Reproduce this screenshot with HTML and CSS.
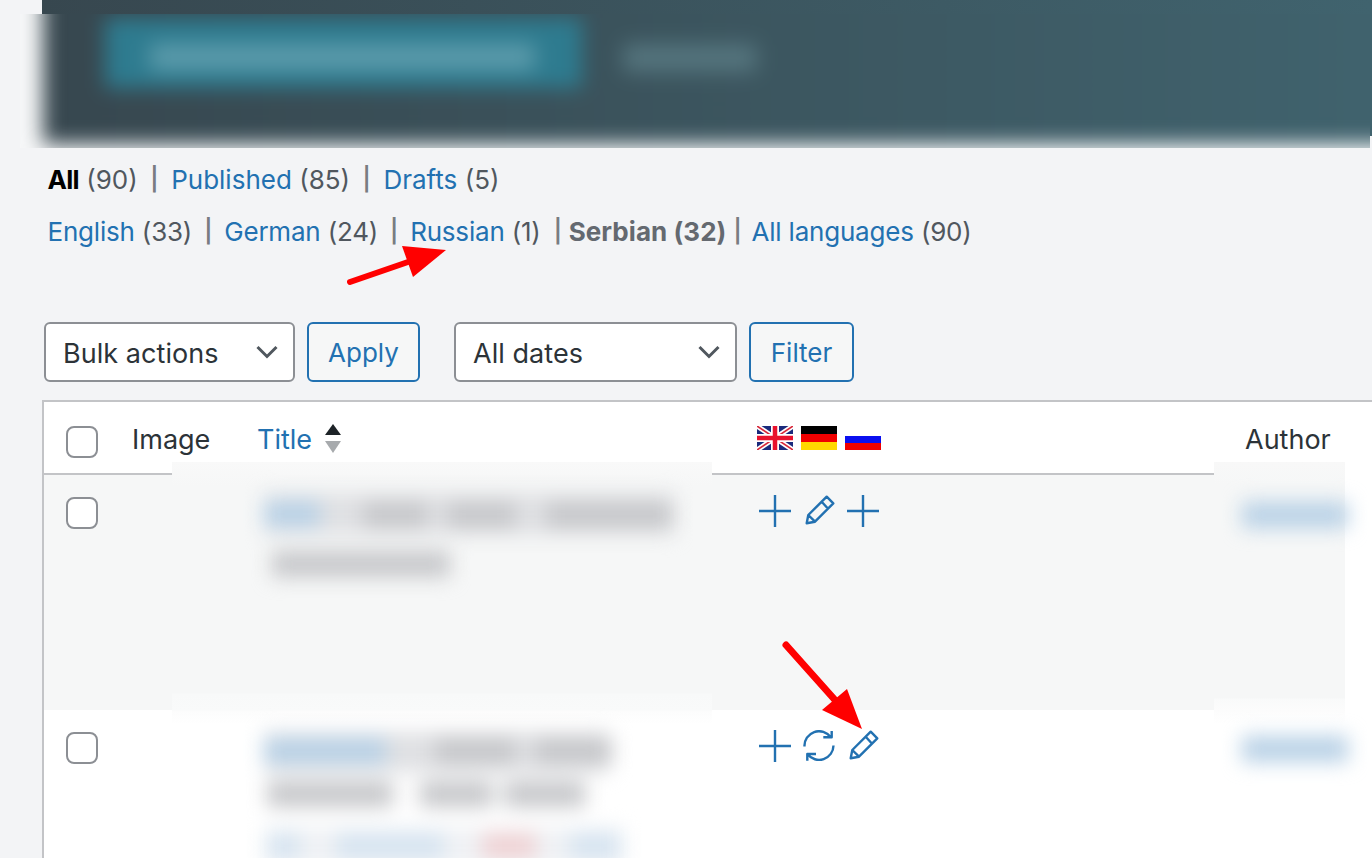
FILE: index.html
```html
<!DOCTYPE html>
<html lang="en">
<head>
<meta charset="utf-8">
<title>Posts</title>
<link rel="stylesheet" href="styles.css">
</head>
<body>
<svg class="defs" aria-hidden="true">
  <symbol id="i-plus" viewBox="0 0 32 32"><path d="M16 0V32M0 16H32"/></symbol>
  <symbol id="i-edit" viewBox="0 0 32 32"><path d="M23.7 1.7L30.3 8.3L12 26.7L3.7 28.3L5.3 20ZM18.7 6.7L25.3 14M5.8 20.5L11.5 26.2"/></symbol>
  <symbol id="i-sync" viewBox="0 0 32 32"><path d="M1.5 16.5A14.5 14.5 0 0 1 27.8 7.3M30.5 15.5A14.5 14.5 0 0 1 4.6 24.3M20.3 7.3H28.7V1M13 24H4.3V30.7"/></symbol>
</svg>

<header class="banner">
  <div class="banner-strip"></div>
  <div class="banner-shot">
    <div class="banner-dark">
      <div class="banner-btn"><div class="banner-btn-text"></div></div>
      <div class="banner-link"></div>
    </div>
  </div>
</header>

<ul class="filters filters-status">
  <li><strong class="current">All</strong> <span class="count">(90)</span></li>
  <li class="sep">|</li>
  <li><a href="#">Published</a> <span class="count">(85)</span></li>
  <li class="sep">|</li>
  <li><a href="#">Drafts</a> <span class="count">(5)</span></li>
</ul>
<ul class="filters filters-lang">
  <li><a href="#">English</a> <span class="count">(33)</span></li>
  <li class="sep">|</li>
  <li><a href="#">German</a> <span class="count">(24)</span></li>
  <li class="sep">|</li>
  <li><a href="#">Russian</a> <span class="count">(1)</span></li>
  <li class="sep sep-before">|</li>
  <li class="lang-current">Serbian (32)</li>
  <li class="sep sep-after">|</li>
  <li><a href="#">All languages</a> <span class="count">(90)</span></li>
</ul>

<div class="actions">
  <div class="select select-bulk">Bulk actions <svg class="chevron" viewBox="0 0 22 14"><path d="M1.5 2L11 11.5L20.5 2"/></svg></div>
  <button class="btn btn-apply">Apply</button>
  <div class="select select-dates">All dates <svg class="chevron" viewBox="0 0 22 14"><path d="M1.5 2L11 11.5L20.5 2"/></svg></div>
  <button class="btn btn-filter">Filter</button>
</div>

<section class="table">
  <div class="row row-head">
    <div class="cell-check"><span class="checkbox"></span></div>
    <div class="col-image">Image</div>
    <div class="col-title"><a href="#">Title</a>
      <span class="sort"><i class="sort-up"></i><i class="sort-down"></i></span>
    </div>
    <div class="col-flags">
      <svg class="flag" viewBox="0 0 36 24"><rect width="36" height="24" fill="#1a2a7c"/><path d="M0 0L36 24M36 0L0 24" stroke="#fff" stroke-width="5"/><path d="M0 0L36 24M36 0L0 24" stroke="#d8283a" stroke-width="1.6"/><path d="M18 0V24M0 12H36" stroke="#fff" stroke-width="8"/><path d="M18 0V24M0 12H36" stroke="#e8112d" stroke-width="4.5"/></svg>
      <svg class="flag" viewBox="0 0 36 24"><rect width="36" height="8" fill="#000"/><rect y="8" width="36" height="8" fill="#f00000"/><rect y="16" width="36" height="8" fill="#ffd800"/></svg>
      <svg class="flag" viewBox="0 0 36 24"><rect y="7" width="36" height="6" fill="#fff"/><rect y="10" width="36" height="7" fill="#0a10f0"/><rect y="17" width="36" height="7" fill="#f00000"/></svg>
    </div>
    <div class="col-author">Author</div>
  </div>

  <div class="row row-post row-alt">
    <div class="cell-check"><span class="checkbox"></span></div>
    <div></div>
    <div></div>
    <div class="col-icons">
      <svg class="icon"><use href="#i-plus"/></svg>
      <svg class="icon"><use href="#i-edit"/></svg>
      <svg class="icon"><use href="#i-plus"/></svg>
    </div>
    <div></div>
  </div>

  <div class="row row-post row-last">
    <div class="cell-check"><span class="checkbox"></span></div>
    <div></div>
    <div></div>
    <div class="col-icons">
      <svg class="icon"><use href="#i-plus"/></svg>
      <svg class="icon"><use href="#i-sync"/></svg>
      <svg class="icon"><use href="#i-edit"/></svg>
    </div>
    <div></div>
  </div>

  <div class="redact redact-title">
    <div class="smudges">
      <i class="bar haze h1"></i><i class="bar haze h2"></i><i class="bar haze h3"></i>
      <i class="bar blue t1a"></i><i class="bar grey t1b"></i><i class="bar grey t1c"></i><i class="bar grey t1d"></i><i class="bar grey t1e"></i>
      <i class="bar blue t2a"></i><i class="bar grey t2b"></i><i class="bar grey t2c"></i>
      <i class="bar grey t2d"></i><i class="bar grey t2e"></i><i class="bar grey t2f"></i>
      <i class="bar pale t3a"></i><i class="bar pale t3b"></i><i class="bar rose t3c"></i><i class="bar pale t3d"></i>
    </div>
  </div>
  <div class="redact redact-author">
    <div class="smudges">
      <i class="bar blue a1"></i><i class="bar blue a2"></i>
    </div>
  </div>
</section>

<svg class="arrows" viewBox="0 0 1372 858" aria-hidden="true">
  <path class="arrow-line" d="M350 282L408 262"/>
  <path class="arrow-head" d="M402 246L446 250L413 277Z"/>
  <path class="arrow-line arrow-line-wide" d="M786 645L835 700"/>
  <path class="arrow-head" d="M847 689L862 729L822 710Z"/>
</svg>
</body>
</html>
```
FILE: styles.css
```css
* { box-sizing: border-box; }
html, body { height: 858px; overflow: hidden; }
body {
  margin: 0;
  position: relative;
  background: #f3f4f6;
  color: #2c3338;
  font-family: Inter, "Liberation Sans", sans-serif;
  font-size: 26px;
}
a { color: #2271b1; text-decoration: none; }
.defs { position: absolute; width: 0; height: 0; }

/* blurred banner */
.banner { position: relative; height: 148px; }
.banner-strip {
  margin-left: 42px;
  height: 136px;
  background: linear-gradient(90deg, #37474f, #40636e);
}
.banner-shot {
  position: absolute;
  left: 20px; top: 14px; right: 2px; bottom: 0;
  overflow: hidden;
  background: #f6f7f8;
}
.banner-dark {
  position: absolute;
  left: 23px; top: -40px; right: -40px; height: 170px;
  background: linear-gradient(90deg, #37474f, #40636e);
  filter: blur(10px);
}
.banner-btn {
  position: absolute;
  left: 62px; top: 44px; width: 477px; height: 70px;
  background: #2e7b8f;
}
.banner-btn-text {
  position: absolute;
  left: 45px; top: 26px; width: 385px; height: 26px;
  background: #5d9cac;
  filter: blur(3px);
}
.banner-link {
  position: absolute;
  left: 580px; top: 70px; width: 134px; height: 28px;
  background: #55757e;
  filter: blur(3px);
}

/* filter links */
.filters {
  list-style: none;
  margin: 0;
  padding: 0 0 0 47.5px;
  display: flex;
  align-items: center;
  height: 52px;
  white-space: nowrap;
  letter-spacing: -0.2px;
}
.filters-status { margin-top: 5px; letter-spacing: 0; }
.count { color: #50575e; }
.current { color: #000; font-weight: 700; letter-spacing: -0.7px; }
.lang-current { color: #646970; font-weight: 700; letter-spacing: 0.05px; }
.sep { color: #787c82; margin: 0 12px; font-size: 23px; font-weight: 600; }
.filters-status .sep { margin: 0 12.6px; }
.sep-before { margin: 0 7px 0 13px; }
.sep-after { margin: 0 10px 0 7px; }

/* action bar */
.actions {
  display: flex;
  align-items: stretch;
  height: 60px;
  margin: 65px 0 18px 44px;
}
.select {
  display: flex;
  align-items: center;
  justify-content: space-between;
  background: #fff;
  border: 2px solid #8c8f94;
  border-radius: 6px;
  padding: 2px 15px 0 17px;
  color: #2c3338;
  font-size: 27px;
  letter-spacing: 0.05px;
}
.select-bulk { width: 251px; }
.select-dates { width: 283px; margin-left: 34px; }
.chevron { width: 22px; height: 14px; margin-top: -2px; }
.chevron path { fill: none; stroke: #50575e; stroke-width: 3; }
.btn {
  font: inherit;
  color: #2271b1;
  background: #f6f7f7;
  border: 2px solid #2271b1;
  border-radius: 6px;
  padding: 0;
  margin-left: 12px;
}
.btn-apply { width: 113px; }
.btn-filter { width: 105px; }

/* table */
.table {
  position: relative;
  margin-left: 42px;
  height: 458px;
  background: #fff;
  border-top: 2px solid #c3c4c7;
  border-left: 2px solid #c3c4c7;
}
.row {
  display: grid;
  grid-template-columns: 88px 126px 499px 488px 1fr;
}
.row-head {
  height: 73px;
  align-items: center;
  border-bottom: 2px solid #c3c4c7;
  font-size: 27px;
}
.row-head .col-title, .row-head .col-image, .row-head .col-author { padding-top: 4px; }
.row-post { height: 235px; }
.row-last { height: 148px; }
.row-alt { background: #f6f7f7; }
.cell-check { padding-left: 22px; display: flex; }
.row-head .cell-check { padding-top: 8px; }
.row-post .cell-check { padding-top: 22px; }
.checkbox {
  width: 32px; height: 32px;
  background: #fff;
  border: 2px solid #8c8f94;
  border-radius: 8px;
}
.col-title { display: flex; align-items: center; gap: 13px; margin-left: -1px; }
.sort { display: flex; flex-direction: column; gap: 6px; margin-top: -3px; }
.sort i { display: block; width: 0; height: 0; border-left: 8px solid transparent; border-right: 8px solid transparent; }
.sort-up { border-bottom: 11px solid #1d2327; }
.sort-down { border-top: 12px solid #a7aaad; }
.col-flags { display: flex; gap: 8px; }
.flag { width: 36px; height: 24px; filter: blur(0.6px); }
.col-icons { display: flex; gap: 12px; padding: 20px 0 0 2px; align-self: start; }
.icon { width: 32px; height: 32px; fill: none; stroke: #2271b1; stroke-width: 2.4; stroke-linejoin: round; }

/* redacted, blurred patches over the table */
.redact { position: absolute; top: 60px; height: 396px; overflow: hidden; }
.redact-title {
  left: 128px; width: 540px;
  background: linear-gradient(180deg, #f9f9f9 0, #f6f7f7 24px, #f6f7f7 231px, #f8f9f9 232px, #f9fafa 248px, #fcfcfc 249px, #fff 262px);
}
.redact-author {
  left: 1170px; width: 160px;
  background:
    linear-gradient(90deg, transparent 131px, #fff 131px),
    linear-gradient(180deg, #f8f8f8 0, #f6f7f7 24px, #f6f7f7 236px, #f9fafa 237px, #fcfcfc 249px, #fff 262px);
}
.smudges { position: absolute; inset: 0; filter: blur(10px); }
.bar { position: absolute; display: block; height: 26px; }
.haze { background: #dfe0e3; height: 40px; }
.blue { background: #b8d1e6; }
.grey { background: #c6c7ca; }
.pale { background: #d6e4f1; }
.rose { background: #f0d2d4; }
.h1 { left: 92px; top: 32px; width: 410px; }
.h2 { left: 92px; top: 270px; width: 345px; }
.h3 { left: 92px; top: 366px; width: 360px; background: #f0f2f5; }
.t1a { left: 92px; top: 39px; width: 56px; }
.t1b { left: 191px; top: 40px; width: 65px; }
.t1c { left: 275px; top: 40px; width: 69px; }
.t1d { left: 374px; top: 40px; width: 127px; }
.t1e { left: 100px; top: 89px; width: 178px; }
.t2a { left: 92px; top: 276px; width: 122px; }
.t2b { left: 263px; top: 276px; width: 81px; }
.t2c { left: 363px; top: 276px; width: 77px; }
.t2d { left: 95px; top: 319px; width: 126px; }
.t2e { left: 248px; top: 319px; width: 73px; }
.t2f { left: 332px; top: 319px; width: 81px; }
.t3a { left: 96px; top: 371px; width: 32px; }
.t3b { left: 164px; top: 371px; width: 108px; }
.t3c { left: 310px; top: 371px; width: 54px; }
.t3d { left: 398px; top: 371px; width: 50px; }
.a1 { left: 28px; top: 40px; width: 106px; }
.a2 { left: 28px; top: 274px; width: 106px; }

/* annotation arrows */
.arrows { position: absolute; left: 0; top: 0; width: 1372px; height: 858px; pointer-events: none; }
.arrow-line { fill: none; stroke: #ff0000; stroke-width: 6; stroke-linecap: round; }
.arrow-line-wide { stroke-width: 7; }
.arrow-head { fill: #ff0000; }
```
